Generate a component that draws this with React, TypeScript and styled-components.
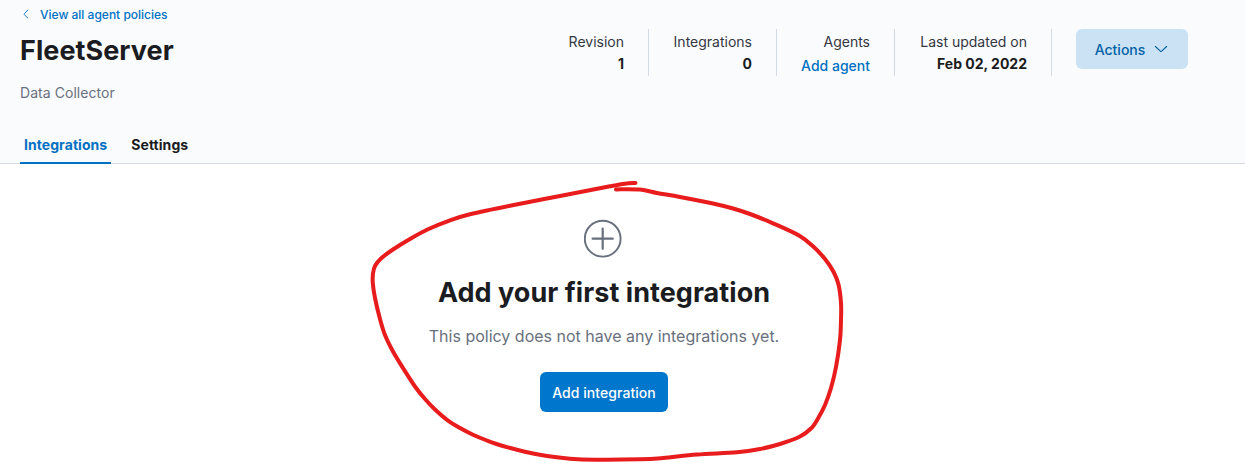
import React from 'react';
import styled, { createGlobalStyle } from 'styled-components';

const GlobalStyle = createGlobalStyle`
  *, *::before, *::after { box-sizing: border-box; }
  body {
    margin: 0;
    background: #fff;
    color: #343741;
    font-family: Inter, "Liberation Sans", sans-serif;
    font-size: 14px;
    line-height: 20px;
  }
  h1, h2, p, dl, dt, dd { margin: 0; }
`;

const Page = styled.div`
  position: relative;
  height: 471px;
  overflow: hidden;
`;

const Header = styled.header`
  height: 164px;
  display: flex;
  flex-direction: column;
  justify-content: space-between;
  background: #fafbfd;
  border-bottom: 1px solid #d3dae6;
`;

const HeaderTop = styled.div`
  display: flex;
  justify-content: space-between;
  padding: 5px 57px 0 20px;
`;

const Heading = styled.div`
  display: flex;
  flex-direction: column;
  align-items: flex-start;
`;

const BackLink = styled.a`
  display: flex;
  align-items: center;
  gap: 8px;
  color: #0071c2;
  font-size: 12px;
  font-weight: 500;
`;

const PolicyName = styled.h1`
  margin-top: 10px;
  color: #1a1c21;
  font-size: 27px;
  font-weight: 700;
  letter-spacing: 0.05px;
  line-height: 32px;
`;

const Description = styled.p`
  margin-top: 16px;
  color: #69707d;
  letter-spacing: 0.05px;
`;

const Summary = styled.div`
  display: flex;
  align-items: flex-start;
  padding-top: 24px;
`;

const StatList = styled.dl`
  display: flex;
`;

const Stat = styled.div<{ $width: number }>`
  width: ${(p) => p.$width}px;
  height: 47px;
  padding: 3px 24px 0 0;
  border-right: 1px solid #d3dae6;
  text-align: right;
  white-space: nowrap;
  display: flex;
  flex-direction: column;
  align-items: flex-end;
`;

const StatValue = styled.dd<{ $link?: boolean }>`
  margin-top: ${(p) => (p.$link ? 4 : 2)}px;
  color: ${(p) => (p.$link ? '#0071c2' : '#1a1c21')};
  font-weight: ${(p) => (p.$link ? 500 : 700)};
`;

const Button = styled.button<{ $fill?: boolean }>`
  display: flex;
  align-items: center;
  justify-content: center;
  gap: 8px;
  height: 40px;
  width: ${(p) => (p.$fill ? 128 : 112)}px;
  padding: 2px 0 0;
  border: 0;
  border-radius: 6px;
  background: ${(p) => (p.$fill ? '#0077cc' : '#cae2f3')};
  color: ${(p) => (p.$fill ? '#fff' : '#0061a6')};
  font: 500 14px/20px Inter, "Liberation Sans", sans-serif;
  letter-spacing: ${(p) => (p.$fill ? 0.05 : 0)}px;
  white-space: nowrap;
`;

const ActionsSlot = styled.div`
  margin-left: 24px;
`;

const Tabs = styled.nav`
  display: flex;
  gap: 16px;
  padding-left: 20px;
  margin-bottom: -1px;
`;

const Tab = styled.a<{ $selected?: boolean }>`
  height: 39px;
  padding: 10px 4px 0;
  border-bottom: 2px solid ${(p) => (p.$selected ? '#0071c2' : 'transparent')};
  color: ${(p) => (p.$selected ? '#0071c2' : '#1a1c21')};
  font-weight: 700;
  letter-spacing: 0.06px;
`;

const EmptyPrompt = styled.main`
  display: flex;
  flex-direction: column;
  align-items: center;
  padding: 55px 37px 0 0;
`;

const PromptTitle = styled.h2`
  margin-top: 16px;
  color: #1a1c21;
  font-size: 27px;
  font-weight: 700;
  letter-spacing: 0.05px;
  line-height: 36px;
`;

const PromptBody = styled.p`
  margin: 13px 0 24px;
  color: #69707d;
  font-size: 16px;
  line-height: 24px;
`;

const Annotation = styled.svg`
  position: absolute;
  inset: 0;
  pointer-events: none;
`;

const stats = [
  { label: 'Revision', value: '1', width: 90 },
  { label: 'Integrations', value: '0', width: 128 },
  { label: 'Agents', value: 'Add agent', width: 118, link: true },
  { label: 'Last updated on', value: 'Feb 02, 2022', width: 157 },
];

const markerPoints = [
  [635.5, 183], [625, 183.7], [610, 186.3], [560, 196], [510, 205.7], [470, 214.3],
  [450, 220.3], [428, 229.3], [410, 239], [393, 249.5], [381, 258.5], [375, 266],
  [373, 273.5], [372.8, 283], [375, 298], [380, 319], [385, 335], [393, 351.5],
  [403, 368], [415, 386.5], [425, 399], [435, 409.5], [447, 419.8], [460, 428],
  [473, 434.7], [487, 440.5], [503, 446], [526, 452], [547, 456], [570, 458.7],
  [595, 459.7], [640, 459.3], [663, 458], [697, 454.6], [737, 452.3], [760, 449],
  [780, 444], [800, 436.5], [811.5, 428], [818, 418.5], [825, 405], [831, 388],
  [836, 367], [840, 340], [841, 320], [841, 303], [838.5, 284.5], [833.5, 271.7],
  [825, 259], [813, 246.3], [799, 235.5], [773, 223.3], [750, 214], [733, 208.5],
  [713, 203.5], [680, 197], [657, 193], [640, 189.6], [616, 189.4],
];

// Catmull-Rom spline through the points, written as cubic segments.
function smoothPath(points: number[][]) {
  let d = `M${points[0].join(' ')}`;
  for (let i = 0; i < points.length - 1; i++) {
    const a = points[Math.max(0, i - 1)];
    const b = points[i];
    const c = points[i + 1];
    const e = points[Math.min(points.length - 1, i + 2)];
    d += ` C${b[0] + (c[0] - a[0]) / 6} ${b[1] + (c[1] - a[1]) / 6} ${c[0] - (e[0] - b[0]) / 6} ${c[1] - (e[1] - b[1]) / 6} ${c[0]} ${c[1]}`;
  }
  return d;
}

export default function App() {
  return (
    <Page>
      <GlobalStyle />
      <Header>
        <HeaderTop>
          <Heading>
            <BackLink>
              <svg width="12" height="12" viewBox="0 0 12 12" fill="none" stroke="currentColor" strokeLinecap="round" strokeLinejoin="round">
                <path d="M7.8 1 4.3 4.8Q3.9 5.25 4.3 5.7L7.8 9" strokeWidth=".9" />
              </svg>
              View all agent policies
            </BackLink>
            <PolicyName>FleetServer</PolicyName>
            <Description>Data Collector</Description>
          </Heading>
          <Summary>
            <StatList>
              {stats.map((s) => (
                <Stat key={s.label} $width={s.width}>
                  <dt>{s.label}</dt>
                  <StatValue $link={s.link}>{s.value}</StatValue>
                </Stat>
              ))}
            </StatList>
            <ActionsSlot>
              <Button>
                Actions
                <svg width="16" height="16" viewBox="0 0 16 16" fill="none" stroke="currentColor" strokeLinecap="round" strokeLinejoin="round">
                  <path d="M2.4 4.5 7.6 9.3Q8 9.7 8.4 9.3L13.6 4.5" strokeWidth="1.15" />
                </svg>
              </Button>
            </ActionsSlot>
          </Summary>
        </HeaderTop>
        <Tabs>
          <Tab $selected>Integrations</Tab>
          <Tab>Settings</Tab>
        </Tabs>
      </Header>
      <EmptyPrompt>
        <svg width="40" height="40" viewBox="0 0 40 40" fill="none" stroke="#69707d" strokeLinecap="round">
          <circle cx="18.7" cy="19.7" r="17.9" strokeWidth="1.9" />
          <path d="M18.7 9.6v20.2M8.6 19.7h20.2" strokeWidth="2.2" />
        </svg>
        <PromptTitle>Add your first integration</PromptTitle>
        <PromptBody>This policy does not have any integrations yet.</PromptBody>
        <Button $fill>Add integration</Button>
      </EmptyPrompt>
      <Annotation width="1245" height="471" viewBox="0 0 1245 471" fill="none">
        <path d={smoothPath(markerPoints)} stroke="#e81c1c" strokeWidth="4" strokeLinecap="round" strokeLinejoin="round" />
      </Annotation>
    </Page>
  );
}
